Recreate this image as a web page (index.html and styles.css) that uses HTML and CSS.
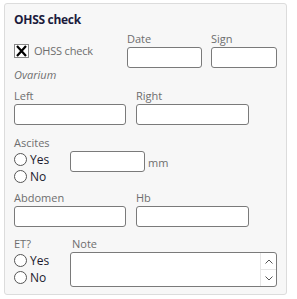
FILE: index.html
```html
<!DOCTYPE html>
<html>
<head>
<meta charset="utf-8">
<link rel="stylesheet" href="styles.css">
</head>
<body>
<div class="panel">
  <div class="title">OHSS check</div>
  <div class="row row-top">
    <div class="check-col">
      <label class="check">
        <span class="box"><svg width="13" height="12" viewBox="0 0 13 12"><path d="M2 1 L11 11 M11 1 L2 11" stroke="#000" stroke-width="2.2" fill="none"/></svg></span>
        <span class="check-text">OHSS check</span>
      </label>
    </div>
    <div class="field w-date">
      <div class="lbl">Date</div>
      <div class="input"></div>
    </div>
    <div class="field w-sign">
      <div class="lbl">Sign</div>
      <div class="input"></div>
    </div>
  </div>
  <div class="section">Ovarium</div>
  <div class="row row-lr">
    <div class="field w-half">
      <div class="lbl">Left</div>
      <div class="input"></div>
    </div>
    <div class="field w-half2">
      <div class="lbl">Right</div>
      <div class="input"></div>
    </div>
  </div>
  <div class="row row-asc">
    <div class="radio-col">
      <div class="lbl">Ascites</div>
      <div class="radios">
        <label class="radio"><span class="circle"></span>Yes</label>
        <label class="radio"><span class="circle"></span>No</label>
      </div>
    </div>
    <div class="asc-input">
      <div class="input w-asc"></div>
      <span class="unit">mm</span>
    </div>
  </div>
  <div class="row row-ab">
    <div class="field w-half">
      <div class="lbl">Abdomen</div>
      <div class="input"></div>
    </div>
    <div class="field w-half2">
      <div class="lbl">Hb</div>
      <div class="input"></div>
    </div>
  </div>
  <div class="row row-et">
    <div class="radio-col">
      <div class="lbl">ET?</div>
      <div class="radios et">
        <label class="radio"><span class="circle"></span>Yes</label>
        <label class="radio"><span class="circle"></span>No</label>
      </div>
    </div>
    <div class="field w-note">
      <div class="lbl note-lbl">Note</div>
      <div class="textarea">
        <div class="ta-body"></div>
        <div class="scroll">
          <div class="sbtn"><svg width="8" height="5" viewBox="0 0 8 5"><path d="M0.5 4.5 L4 1 L7.5 4.5" stroke="#555" stroke-width="1" fill="none"/></svg></div>
          <div class="sbtn sbtn-down"><svg width="8" height="5" viewBox="0 0 8 5"><path d="M0.5 0.5 L4 4 L7.5 0.5" stroke="#555" stroke-width="1" fill="none"/></svg></div>
        </div>
      </div>
    </div>
  </div>
</div>
</body>
</html>
```

FILE: styles.css
```css
html, body {
  margin: 0;
  padding: 0;
  background: #fff;
}
body {
  font-family: "Open Sans", "Noto Sans", sans-serif;
  font-size: 11px;
  color: #6e6e6e;
}
.panel {
  margin: 3px 0 0 4px;
  width: 272px;
  height: 290px;
  background: #f7f7f7;
  border: 1px solid #dcdcdc;
  border-radius: 3px;
  padding: 0 0 0 9px;
  box-sizing: content-box;
}
.title {
  font-weight: bold;
  font-size: 12px;
  letter-spacing: -0.3px;
  color: #1b1b3c;
  line-height: 16px;
  margin-top: 8px;
}
.row {
  display: flex;
}
.lbl {
  line-height: 14px;
  height: 14px;
  margin-bottom: 1px;
}
.input {
  height: 19px;
  background: #fff;
  border: 1px solid #7a7a7a;
  border-radius: 3px;
}
.row-top {
  margin-top: 4px;
}
.check-col {
  width: 113px;
  padding-top: 12px;
}
.check {
  display: flex;
  align-items: center;
}
.box {
  width: 13px;
  height: 12px;
  border: 1px solid #888;
  background: #fff;
  display: flex;
  align-items: center;
  justify-content: center;
}
.check-text {
  margin-left: 5px;
  line-height: 14px;
  letter-spacing: -0.2px;
}
.w-date { width: 75px; margin-right: 9px; }
.w-sign { width: 66px; }
.section {
  font-style: italic;
  line-height: 14px;
}
.row-lr { margin-top: 7px; }
.w-half { width: 112px; margin-right: 10px; }
.w-half2 { width: 113px; }
.row-asc { margin-top: 11px; }
.radio-col { width: 56px; }
.radios { display: flex; flex-direction: column; margin-top: 1px; }
.radio {
  display: flex;
  align-items: center;
  height: 17px;
  color: #1a1a2c;
  font-size: 12px;
}
.circle {
  width: 11px;
  height: 11px;
  border: 1px solid #555;
  border-radius: 50%;
  background: #fff;
  margin-right: 3px;
}
.asc-input {
  display: flex;
  align-items: flex-end;
  align-self: flex-start;
  margin-top: 15px;
}
.w-asc { width: 73px; }
.unit {
  margin-left: 3px;
  line-height: 14px;
  margin-bottom: 2px;
}
.row-ab { margin-top: 6px; }
.row-et { margin-top: 10px; }
.w-note { width: 207px; }
.note-lbl { margin-left: 2px; }
.textarea {
  display: flex;
  height: 33px;
  background: #fff;
  border: 1px solid #7a7a7a;
  border-radius: 3px;
}
.ta-body { flex: 1; }
.scroll {
  width: 15px;
  display: flex;
  flex-direction: column;
  border-left: 1px solid #e6e6e6;
}
.sbtn {
  flex: 1;
  display: flex;
  align-items: center;
  justify-content: center;
}
.sbtn-down { border-top: 1px solid #e6e6e6; }
```
